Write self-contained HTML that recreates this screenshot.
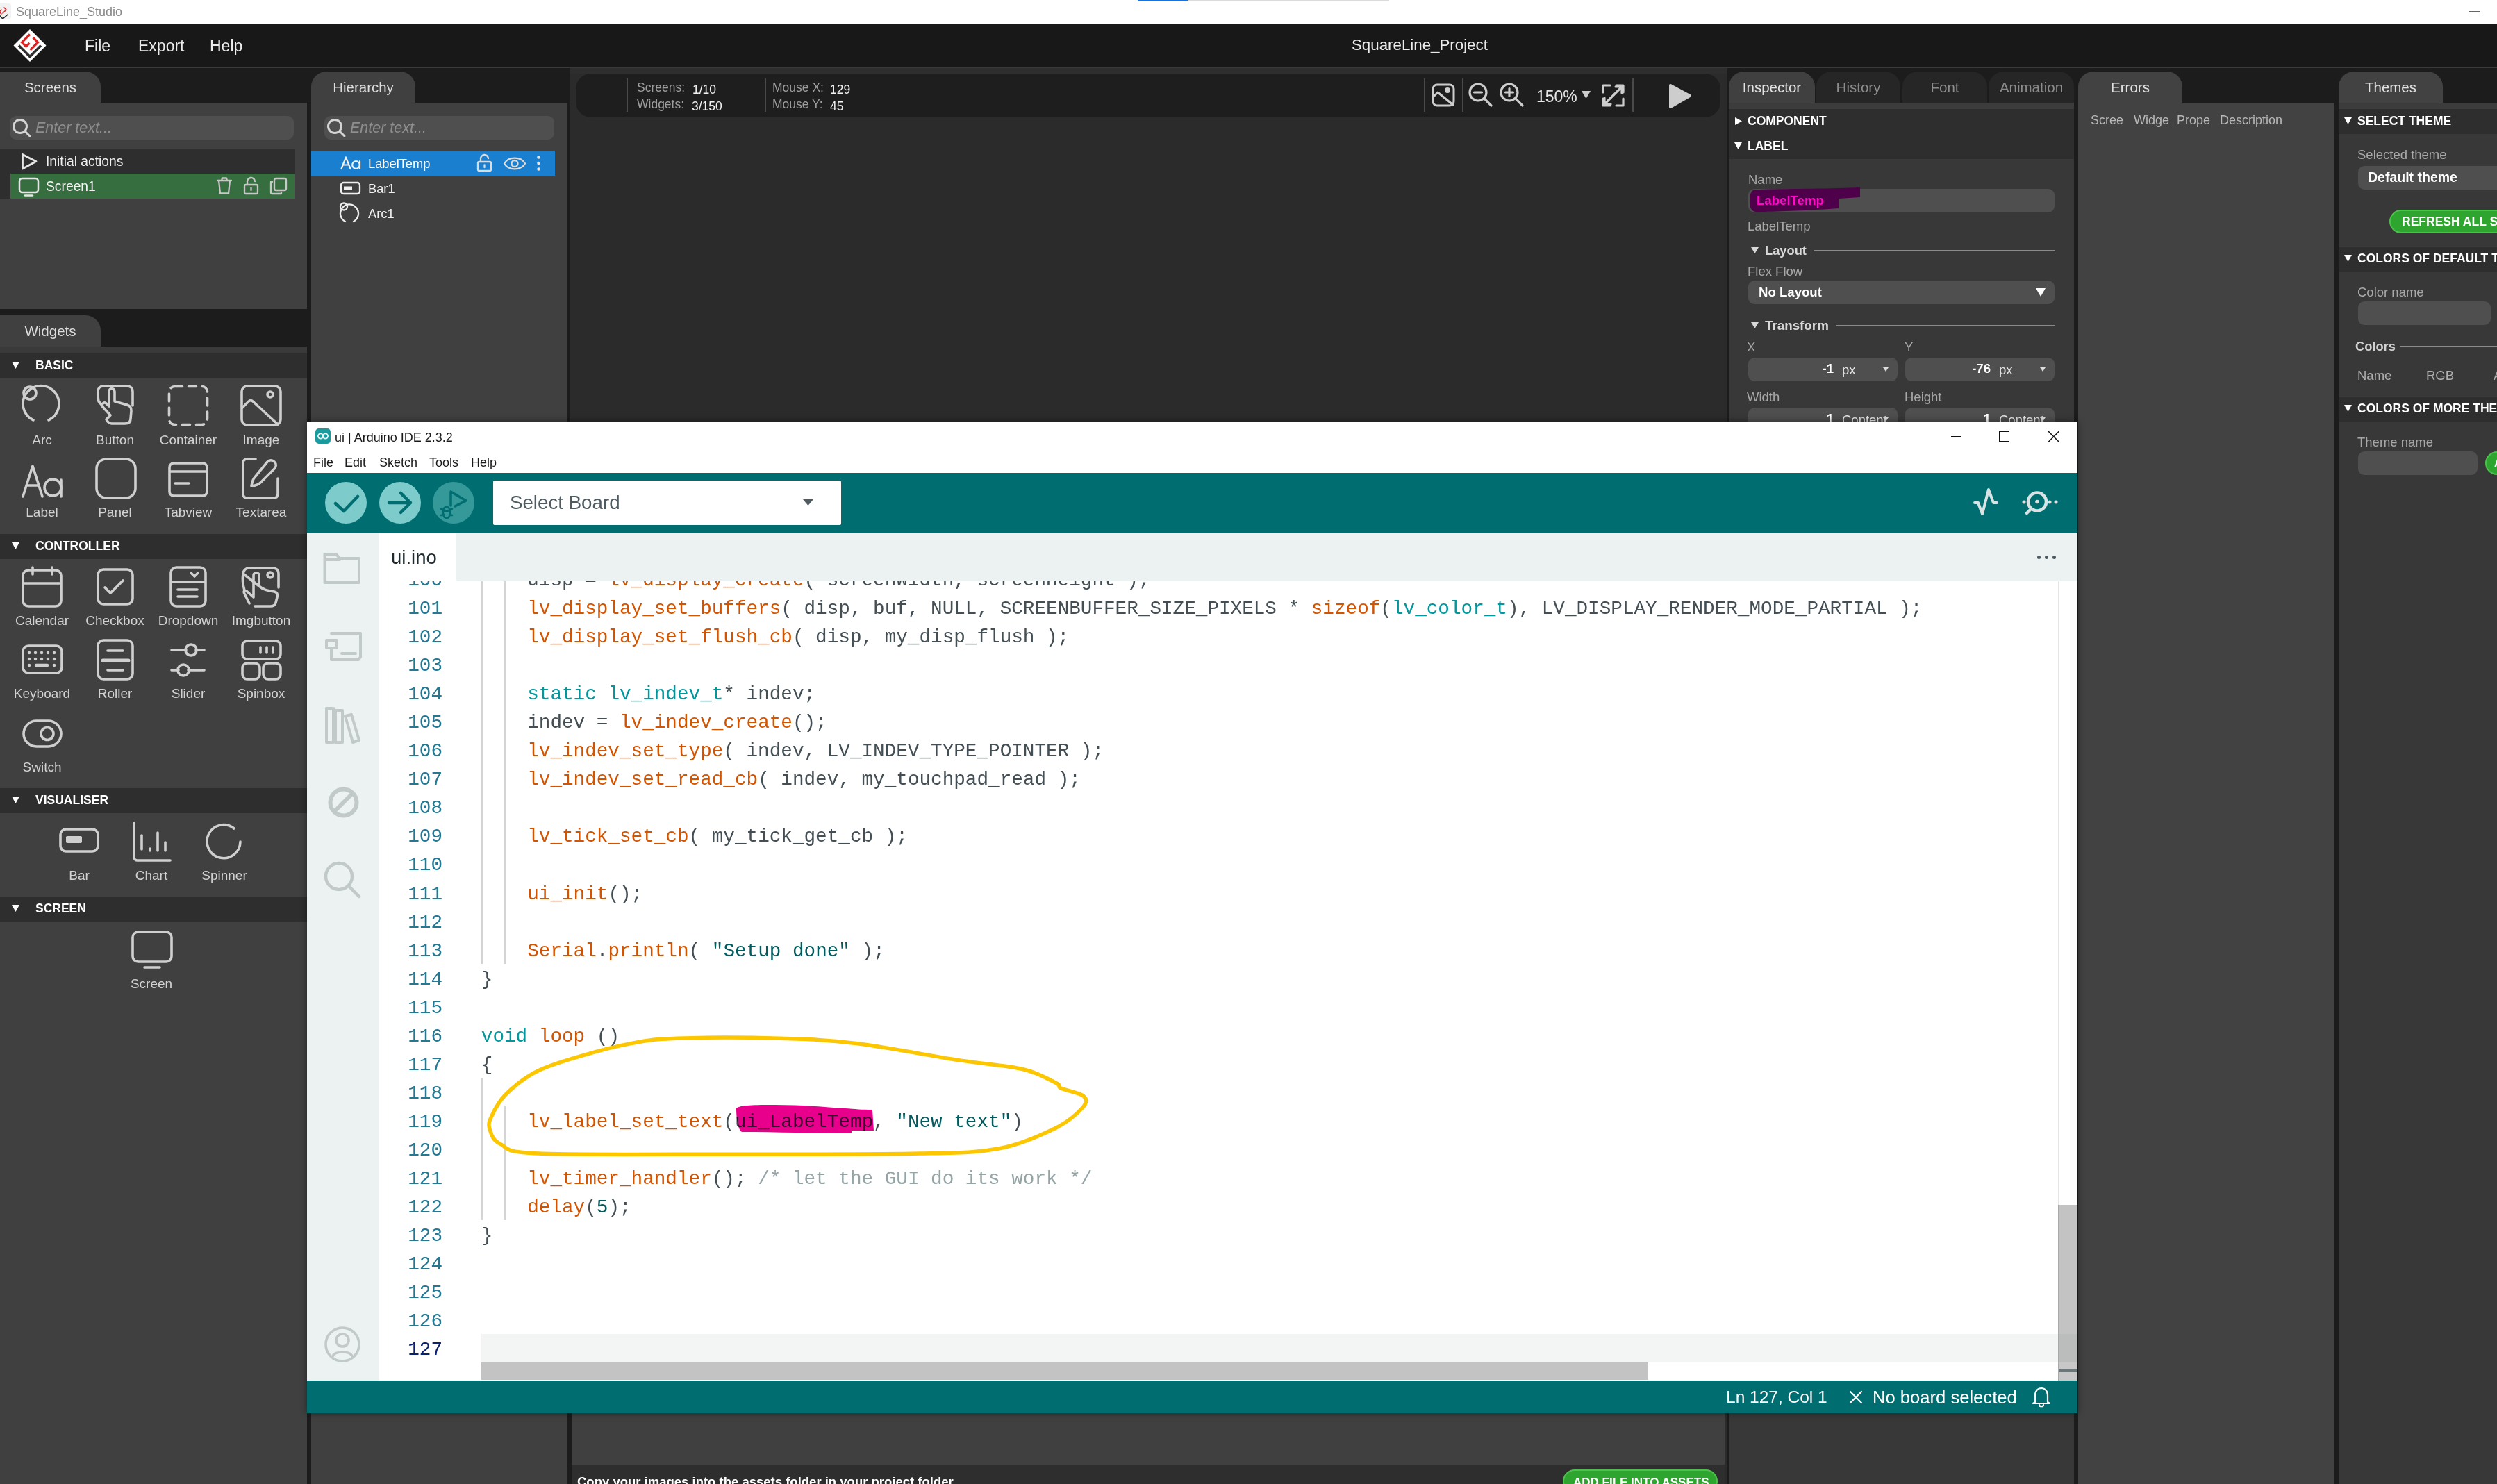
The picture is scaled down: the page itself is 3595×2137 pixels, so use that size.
<!DOCTYPE html>
<html><head><meta charset="utf-8"><style>
*{margin:0;padding:0;box-sizing:border-box}
html,body{width:3595px;height:2137px;overflow:hidden;background:#1c1c1c;font-family:"Liberation Sans",sans-serif;position:relative}
.a{position:absolute}
.t{position:absolute;white-space:nowrap;line-height:1}
svg{position:absolute;overflow:visible}
.code{position:absolute;left:693.6px;font-family:"Liberation Mono",monospace;font-size:27.66px;white-space:pre;color:#434f54;line-height:41.03px;height:41.03px}
.ln{position:absolute;left:535px;width:100px;text-align:right;font-family:"Liberation Mono",monospace;font-size:27.66px;color:#237893;line-height:41.03px;height:41.03px}
.f{color:#d35400}.k{color:#00979d}.s{color:#005c5f}.c{color:#95a5a6}.d{color:#4e5b61}
</style></head><body>
<div class="a" style="left:0px;top:0px;width:3595px;height:34px;background:#ffffff;"></div>
<div class="a" style="left:1638px;top:0px;width:72px;height:2px;background:#1a73d9;"></div>
<div class="a" style="left:1710px;top:0px;width:290px;height:2px;background:#dcdcdc;"></div>
<svg style="left:-2px;top:5px" width="20" height="24" viewBox="0 0 20 24" fill="none" stroke="#cfcfcf" stroke-width="0" stroke-linecap="round" stroke-linejoin="round" ><rect x="0" y="0" width="18" height="23" rx="4" fill="#f2f2f2" stroke="none"/><path d="M0 16 L6 22 L13 16" stroke="#222" stroke-width="1.6"/><path d="M4 9 L1 12 L4 15 M8 6 L11 9 L6 14" stroke="#e02424" stroke-width="1.6"/></svg>
<div class="t" style="left:23px;top:8.2px;font-size:18px;color:#8a8a8a;font-weight:normal;font-style:normal;font-family:"Liberation Sans",sans-serif;">SquareLine_Studio</div>
<div class="a" style="left:3555px;top:16px;width:15px;height:1px;background:#666;"></div>
<div class="a" style="left:0px;top:34px;width:3595px;height:63px;background:#181818;"></div>
<div class="a" style="left:0px;top:97px;width:3595px;height:1px;background:#3a3a3a;"></div>
<svg style="left:18px;top:40px" width="50" height="50" viewBox="0 0 50 50" fill="none" stroke="#cfcfcf" stroke-width="0" stroke-linecap="round" stroke-linejoin="round" ><path d="M25 2 L48.5 25.5 L25 49 L1.5 25.5 Z" fill="#fff" stroke="none"/><path d="M9 25.5 L25 41.5 L41 25.5" stroke="#2e2e2e" stroke-width="3.8" stroke-linecap="butt"/><path d="M25 9.5 L13.5 21 L19.5 27 L24.5 22" stroke="#e02424" stroke-width="3.2" stroke-linecap="butt" stroke-linejoin="miter"/><path d="M29.5 14 L36.5 21 L25.5 32" stroke="#e02424" stroke-width="3.2" stroke-linecap="butt" stroke-linejoin="miter"/></svg>
<div class="t" style="left:122px;top:54.7px;font-size:23px;color:#ececec;font-weight:normal;font-style:normal;font-family:"Liberation Sans",sans-serif;">File</div>
<div class="t" style="left:199px;top:54.7px;font-size:23px;color:#ececec;font-weight:normal;font-style:normal;font-family:"Liberation Sans",sans-serif;">Export</div>
<div class="t" style="left:302px;top:54.7px;font-size:23px;color:#ececec;font-weight:normal;font-style:normal;font-family:"Liberation Sans",sans-serif;">Help</div>
<div class="t" style="left:1946px;top:54.1px;font-size:22.3px;color:#ececec;font-weight:normal;font-style:normal;font-family:"Liberation Sans",sans-serif;">SquareLine_Project</div>
<div class="a" style="left:0px;top:103px;width:145px;height:45px;background:#404040;border-radius:0 22px 0 0"></div>
<div class="t" style="left:0px;width:145px;text-align:center;top:115.5px;font-size:20.5px;color:#dcdcdc">Screens</div>
<div class="a" style="left:0px;top:148px;width:442px;height:297px;background:#404040;"></div>
<div class="a" style="left:14px;top:167px;width:409px;height:34px;background:#4f4f4f;border-radius:9px"></div>
<svg style="left:17px;top:171px" width="30" height="28" viewBox="0 0 30 28" fill="none" stroke="#d4d4d4" stroke-width="3" stroke-linecap="round" stroke-linejoin="round" ><circle cx="12" cy="11" r="9.5"/><path d="M19 18 L26 25"/></svg>
<div class="t" style="left:51px;top:173.5px;font-size:21.5px;color:#8e8e8e;font-weight:normal;font-style:italic;font-family:"Liberation Sans",sans-serif;">Enter text...</div>
<div class="a" style="left:0px;top:214px;width:424px;height:72px;background:#2e2e2e;"></div>
<svg style="left:30px;top:220px" width="26" height="26" viewBox="0 0 26 26" fill="none" stroke="#e6e6e6" stroke-width="2.8" stroke-linecap="round" stroke-linejoin="round" ><path d="M2.5 2.5 L22 12.5 L2.5 23 Z"/></svg>
<div class="t" style="left:66px;top:223.0px;font-size:19.3px;color:#f0f0f0;font-weight:normal;font-style:normal;font-family:"Liberation Sans",sans-serif;">Initial actions</div>
<div class="a" style="left:15px;top:250px;width:409px;height:36px;background:#366e3f;"></div>
<svg style="left:26px;top:255px" width="32" height="28" viewBox="0 0 32 28" fill="none" stroke="#e6e6e6" stroke-width="2.5" stroke-linecap="round" stroke-linejoin="round" ><rect x="2" y="2" width="27" height="20" rx="4"/><path d="M10 26.5 L21 26.5"/></svg>
<div class="t" style="left:66px;top:259.0px;font-size:19.3px;color:#f4f4f4;font-weight:normal;font-style:normal;font-family:"Liberation Sans",sans-serif;">Screen1</div>
<svg style="left:311px;top:255px" width="24" height="26" viewBox="0 0 24 26" fill="none" stroke="#c8c8c8" stroke-width="2.3" stroke-linecap="round" stroke-linejoin="round" ><path d="M2 5 L22 5 M8 5 L9 1.5 L15 1.5 L16 5 M4 5 L6 23.5 L18 23.5 L20 5"/></svg>
<svg style="left:350px;top:255px" width="24" height="26" viewBox="0 0 24 26" fill="none" stroke="#c8c8c8" stroke-width="2.3" stroke-linecap="round" stroke-linejoin="round" ><rect x="2" y="11" width="19" height="13" rx="2"/><path d="M6 11 L6 7 A5.5 5.5 0 0 1 17 6"/><path d="M11.5 15.5 L11.5 19"/></svg>
<svg style="left:388px;top:255px" width="26" height="26" viewBox="0 0 26 26" fill="none" stroke="#c8c8c8" stroke-width="2.3" stroke-linecap="round" stroke-linejoin="round" ><rect x="7" y="2" width="17" height="17" rx="2.5"/><path d="M4 7 L2 7 L2 22 A2 2 0 0 0 4 24 L17 24 L17 22"/></svg>
<div class="a" style="left:0px;top:454px;width:145px;height:45px;background:#404040;border-radius:0 22px 0 0"></div>
<div class="t" style="left:0px;width:145px;text-align:center;top:466.5px;font-size:20.5px;color:#dcdcdc">Widgets</div>
<div class="a" style="left:0px;top:499px;width:442px;height:1638px;background:#404040;"></div>
<div class="a" style="left:0px;top:499px;width:442px;height:10px;background:#3a3a3a;"></div>
<div class="a" style="left:0px;top:509px;width:442px;height:36px;background:#2e2e2e;"></div>
<svg style="left:17px;top:521px" width="12" height="11" viewBox="0 0 12 11" fill="#fff" stroke="none" stroke-width="0" stroke-linecap="round" stroke-linejoin="round" ><path d="M0 0 L11 0 L5.5 10 Z"/></svg>
<div class="t" style="left:51px;top:518.4px;font-size:17.5px;color:#ffffff;font-weight:bold;font-style:normal;font-family:"Liberation Sans",sans-serif;">BASIC</div>
<div class="a" style="left:0px;top:769px;width:442px;height:36px;background:#2e2e2e;"></div>
<svg style="left:17px;top:781px" width="12" height="11" viewBox="0 0 12 11" fill="#fff" stroke="none" stroke-width="0" stroke-linecap="round" stroke-linejoin="round" ><path d="M0 0 L11 0 L5.5 10 Z"/></svg>
<div class="t" style="left:51px;top:778.4px;font-size:17.5px;color:#ffffff;font-weight:bold;font-style:normal;font-family:"Liberation Sans",sans-serif;">CONTROLLER</div>
<div class="a" style="left:0px;top:1135px;width:442px;height:36px;background:#2e2e2e;"></div>
<svg style="left:17px;top:1147px" width="12" height="11" viewBox="0 0 12 11" fill="#fff" stroke="none" stroke-width="0" stroke-linecap="round" stroke-linejoin="round" ><path d="M0 0 L11 0 L5.5 10 Z"/></svg>
<div class="t" style="left:51px;top:1144.4px;font-size:17.5px;color:#ffffff;font-weight:bold;font-style:normal;font-family:"Liberation Sans",sans-serif;">VISUALISER</div>
<div class="a" style="left:0px;top:1291px;width:442px;height:36px;background:#2e2e2e;"></div>
<svg style="left:17px;top:1303px" width="12" height="11" viewBox="0 0 12 11" fill="#fff" stroke="none" stroke-width="0" stroke-linecap="round" stroke-linejoin="round" ><path d="M0 0 L11 0 L5.5 10 Z"/></svg>
<div class="t" style="left:51px;top:1300.4px;font-size:17.5px;color:#ffffff;font-weight:bold;font-style:normal;font-family:"Liberation Sans",sans-serif;">SCREEN</div>
<svg style="left:31px;top:554px" width="60" height="60" viewBox="0 0 60 60" fill="none" stroke="#cfcfcf" stroke-width="3.6" stroke-linecap="round" stroke-linejoin="round" ><path d="M17 51 A26 26 0 1 1 39 51"/><circle cx="12" cy="12" r="9"/></svg>
<svg style="left:137px;top:554px" width="60" height="62" viewBox="0 0 60 62" fill="none" stroke="#cfcfcf" stroke-width="3.6" stroke-linecap="round" stroke-linejoin="round" ><path d="M22 44 L11 32 C8 29 12 24 16 27 L20 31 L20 10 C20 4 28 4 28 10 L28 24 L46 29 C51 31 52 33 52 38 L51 49 C51 54 48 56 43 56 L24 56 C20 56 18 54 16 50 Z"/><path d="M11 31 L5 24 C4 19 4 12 4 10 C4 5 7 2 12 2 L46 2 C51 2 54 5 54 10 L54 30"/></svg>
<svg style="left:241px;top:554px" width="60" height="60" viewBox="0 0 60 60" fill="none" stroke="#cfcfcf" stroke-width="3.6" stroke-linecap="round" stroke-linejoin="round" ><rect x="2.5" y="2.5" width="55" height="55" rx="8" stroke-dasharray="11 9"/></svg>
<svg style="left:346px;top:554px" width="60" height="60" viewBox="0 0 60 60" fill="none" stroke="#cfcfcf" stroke-width="3.6" stroke-linecap="round" stroke-linejoin="round" ><rect x="2" y="2" width="56" height="56" rx="8"/><path d="M3 33 L12 24 C14 22 16 22 18 24 L54 57"/><circle cx="43" cy="14" r="4"/></svg>
<div class="t" style="left:0.5px;width:120px;text-align:center;top:623.7px;font-size:19px;color:#d2d2d2">Arc</div>
<div class="t" style="left:105.5px;width:120px;text-align:center;top:623.7px;font-size:19px;color:#d2d2d2">Button</div>
<div class="t" style="left:211px;width:120px;text-align:center;top:623.7px;font-size:19px;color:#d2d2d2">Container</div>
<div class="t" style="left:316px;width:120px;text-align:center;top:623.7px;font-size:19px;color:#d2d2d2">Image</div>
<svg style="left:31px;top:667px" width="62" height="52" viewBox="0 0 62 52" fill="none" stroke="#cfcfcf" stroke-width="3.6" stroke-linecap="round" stroke-linejoin="round" ><path d="M2 48 L16 4 L30 48 M7 32 L25 32"/><circle cx="45" cy="35" r="12"/><path d="M57 24 L57 48"/></svg>
<svg style="left:137px;top:659px" width="60" height="60" viewBox="0 0 60 60" fill="none" stroke="#cfcfcf" stroke-width="3.6" stroke-linecap="round" stroke-linejoin="round" ><rect x="2" y="2" width="56" height="56" rx="14"/></svg>
<svg style="left:242px;top:665px" width="58" height="52" viewBox="0 0 58 52" fill="none" stroke="#cfcfcf" stroke-width="3.6" stroke-linecap="round" stroke-linejoin="round" ><rect x="2" y="2" width="54" height="47" rx="6"/><path d="M3 14 L55 14 M10 31 L30 31"/></svg>
<svg style="left:348px;top:659px" width="56" height="60" viewBox="0 0 56 60" fill="none" stroke="#cfcfcf" stroke-width="3.6" stroke-linecap="round" stroke-linejoin="round" ><path d="M20 2 L8 2 C4 2 2 4 2 8 L2 52 C2 56 4 58 8 58 L46 58 C50 58 52 56 52 52 L52 30"/><path d="M37 6 C40 3 44 3 47 6 C50 9 50 13 47 16 L27 36 C24 39 21 40 14 41 C15 34 16 31 19 28 Z"/></svg>
<div class="t" style="left:0.5px;width:120px;text-align:center;top:727.7px;font-size:19px;color:#d2d2d2">Label</div>
<div class="t" style="left:105.5px;width:120px;text-align:center;top:727.7px;font-size:19px;color:#d2d2d2">Panel</div>
<div class="t" style="left:211px;width:120px;text-align:center;top:727.7px;font-size:19px;color:#d2d2d2">Tabview</div>
<div class="t" style="left:316px;width:120px;text-align:center;top:727.7px;font-size:19px;color:#d2d2d2">Textarea</div>
<svg style="left:31px;top:815px" width="60" height="60" viewBox="0 0 60 60" fill="none" stroke="#cfcfcf" stroke-width="3.6" stroke-linecap="round" stroke-linejoin="round" ><rect x="2" y="6" width="55" height="52" rx="8"/><path d="M3 25 L56 25 M16 2 L16 12 M44 2 L44 12"/></svg>
<svg style="left:139px;top:818px" width="54" height="54" viewBox="0 0 54 54" fill="none" stroke="#cfcfcf" stroke-width="3.6" stroke-linecap="round" stroke-linejoin="round" ><rect x="2" y="2" width="50" height="50" rx="8"/><path d="M12 28 L20 36 L38 18"/></svg>
<svg style="left:244px;top:815px" width="54" height="60" viewBox="0 0 54 60" fill="none" stroke="#cfcfcf" stroke-width="3.6" stroke-linecap="round" stroke-linejoin="round" ><rect x="2" y="2" width="50" height="56" rx="8"/><path d="M3 23 L51 23 M31 10 L36 15 L41 10 M12 34 L40 34 M12 44 L40 44"/></svg>
<svg style="left:347px;top:816px" width="58" height="60" viewBox="0 0 58 60" fill="none" stroke="#cfcfcf" stroke-width="3.6" stroke-linecap="round" stroke-linejoin="round" ><path d="M12 53 L5 39 C3 35 5 33 9 36 L18 44 L18 12 C18 8 26 8 26 12 L26 28 C32 33 36 34 48 36 C52 37 53 40 52 44 L50 52 C49 56 46 57 42 57 L20 57"/><path d="M5 34 C2 24 2 16 3 10 C4 4 7 2 12 2 L46 2 C51 2 54 5 54 10 L54 30 M26 28 L3 10"/><circle cx="42" cy="12" r="4"/></svg>
<div class="t" style="left:0.5px;width:120px;text-align:center;top:883.7px;font-size:19px;color:#d2d2d2">Calendar</div>
<div class="t" style="left:105.5px;width:120px;text-align:center;top:883.7px;font-size:19px;color:#d2d2d2">Checkbox</div>
<div class="t" style="left:211px;width:120px;text-align:center;top:883.7px;font-size:19px;color:#d2d2d2">Dropdown</div>
<div class="t" style="left:316px;width:120px;text-align:center;top:883.7px;font-size:19px;color:#d2d2d2">Imgbutton</div>
<svg style="left:31px;top:928px" width="60" height="44" viewBox="0 0 60 44" fill="none" stroke="#cfcfcf" stroke-width="3.6" stroke-linecap="round" stroke-linejoin="round" ><rect x="2" y="2" width="56" height="39" rx="8"/><path d="M11 12 L11 12 M20 12 L20 12 M29 12 L29 12 M38 12 L38 12 M47 12 L47 12 M11 21 L11 21 M20 21 L20 21 M29 21 L29 21 M38 21 L38 21 M47 21 L47 21 M11 30 L11 30 M47 30 L47 30 M21 30 L37 30" stroke-width="4.5"/></svg>
<svg style="left:139px;top:920px" width="56" height="60" viewBox="0 0 56 60" fill="none" stroke="#cfcfcf" stroke-width="3.6" stroke-linecap="round" stroke-linejoin="round" ><rect x="2" y="2" width="50" height="56" rx="8"/><path d="M16 17 L38 17 M9 31 L46 31 M16 45 L38 45"/><path d="M9 31 L46 31" stroke-width="5"/></svg>
<svg style="left:244px;top:926px" width="54" height="56" viewBox="0 0 54 56" fill="none" stroke="#cfcfcf" stroke-width="3.6" stroke-linecap="round" stroke-linejoin="round" ><path d="M3 10 L24 10 M38 10 L50 10 M3 39 L13 39 M27 39 L50 39"/><circle cx="31" cy="10" r="8"/><circle cx="20" cy="39" r="8"/></svg>
<svg style="left:347px;top:921px" width="58" height="58" viewBox="0 0 58 58" fill="none" stroke="#cfcfcf" stroke-width="3.6" stroke-linecap="round" stroke-linejoin="round" ><rect x="2" y="2" width="55" height="26" rx="7"/><rect x="2" y="34" width="25" height="23" rx="7"/><rect x="32" y="34" width="25" height="23" rx="7"/><path d="M28 11 L28 19 M37 11 L37 19 M46 11 L46 19"/></svg>
<div class="t" style="left:0.5px;width:120px;text-align:center;top:988.7px;font-size:19px;color:#d2d2d2">Keyboard</div>
<div class="t" style="left:105.5px;width:120px;text-align:center;top:988.7px;font-size:19px;color:#d2d2d2">Roller</div>
<div class="t" style="left:211px;width:120px;text-align:center;top:988.7px;font-size:19px;color:#d2d2d2">Slider</div>
<div class="t" style="left:316px;width:120px;text-align:center;top:988.7px;font-size:19px;color:#d2d2d2">Spinbox</div>
<svg style="left:32px;top:1036px" width="58" height="42" viewBox="0 0 58 42" fill="none" stroke="#cfcfcf" stroke-width="3.6" stroke-linecap="round" stroke-linejoin="round" ><rect x="2" y="2" width="54" height="37" rx="18.5"/><circle cx="36" cy="20.5" r="9"/></svg>
<div class="t" style="left:0.5px;width:120px;text-align:center;top:1094.7px;font-size:19px;color:#d2d2d2">Switch</div>
<svg style="left:85px;top:1192px" width="58" height="38" viewBox="0 0 58 38" fill="none" stroke="#cfcfcf" stroke-width="3.6" stroke-linecap="round" stroke-linejoin="round" ><rect x="2" y="2" width="54" height="32" rx="8"/><rect x="10" y="12" width="23" height="10" rx="2" fill="#cfcfcf" stroke="none"/></svg>
<svg style="left:190px;top:1182px" width="58" height="60" viewBox="0 0 58 60" fill="none" stroke="#cfcfcf" stroke-width="3.6" stroke-linecap="round" stroke-linejoin="round" ><path d="M3 3 L3 52 C3 55 5 57 8 57 L55 57"/><path d="M14 21 L14 41 M26 40 L26 43 M37 17 L37 43 M48 31 L48 43"/></svg>
<svg style="left:297px;top:1187px" width="54" height="54" viewBox="0 0 54 54" fill="none" stroke="#cfcfcf" stroke-width="3.6" stroke-linecap="round" stroke-linejoin="round" ><path d="M40 6 A24 24 0 1 0 49 25"/></svg>
<div class="t" style="left:54px;width:120px;text-align:center;top:1250.7px;font-size:19px;color:#d2d2d2">Bar</div>
<div class="t" style="left:158px;width:120px;text-align:center;top:1250.7px;font-size:19px;color:#d2d2d2">Chart</div>
<div class="t" style="left:263px;width:120px;text-align:center;top:1250.7px;font-size:19px;color:#d2d2d2">Spinner</div>
<svg style="left:189px;top:1340px" width="60" height="56" viewBox="0 0 60 56" fill="none" stroke="#cfcfcf" stroke-width="3.6" stroke-linecap="round" stroke-linejoin="round" ><rect x="2" y="2" width="56" height="43" rx="8"/><path d="M19 53 L41 53"/></svg>
<div class="t" style="left:158px;width:120px;text-align:center;top:1406.7px;font-size:19px;color:#d2d2d2">Screen</div>
<div class="a" style="left:442px;top:98px;width:6px;height:2039px;background:#1c1c1c;"></div>
<div class="a" style="left:448px;top:103px;width:150px;height:45px;background:#404040;border-radius:22px 22px 0 0"></div>
<div class="t" style="left:448px;width:150px;text-align:center;top:115.5px;font-size:20.5px;color:#dcdcdc">Hierarchy</div>
<div class="a" style="left:448px;top:148px;width:369px;height:1989px;background:#404040;"></div>
<div class="a" style="left:467px;top:167px;width:331px;height:34px;background:#4f4f4f;border-radius:9px"></div>
<svg style="left:470px;top:171px" width="30" height="28" viewBox="0 0 30 28" fill="none" stroke="#d4d4d4" stroke-width="3" stroke-linecap="round" stroke-linejoin="round" ><circle cx="12" cy="11" r="9.5"/><path d="M19 18 L26 25"/></svg>
<div class="t" style="left:504px;top:173.5px;font-size:21.5px;color:#8e8e8e;font-weight:normal;font-style:italic;font-family:"Liberation Sans",sans-serif;">Enter text...</div>
<div class="a" style="left:448px;top:217px;width:351px;height:36px;background:#1a7fcf;"></div>
<svg style="left:489px;top:224px" width="34" height="22" viewBox="0 0 34 22" fill="none" stroke="#f2f2f2" stroke-width="2.2" stroke-linecap="round" stroke-linejoin="round" ><path d="M2.5 19 L9 2.5 L15.5 19 M5 13.5 L13 13.5"/><circle cx="23.5" cy="13.5" r="5.3"/><path d="M29 8 L29 19"/></svg>
<div class="t" style="left:530px;top:227.0px;font-size:18.3px;color:#ffffff;font-weight:normal;font-style:normal;font-family:"Liberation Sans",sans-serif;">LabelTemp</div>
<svg style="left:686px;top:222px" width="24" height="27" viewBox="0 0 24 27" fill="none" stroke="#dcdcdc" stroke-width="2.3" stroke-linecap="round" stroke-linejoin="round" ><rect x="2" y="11" width="19" height="13" rx="2"/><path d="M6 11 L6 7 A5.5 5.5 0 0 1 17 6"/><path d="M11.5 15.5 L11.5 19"/></svg>
<svg style="left:724px;top:226px" width="35" height="20" viewBox="0 0 35 20" fill="none" stroke="#dcdcdc" stroke-width="2.3" stroke-linecap="round" stroke-linejoin="round" ><path d="M2 9.5 C8 -1 26 -1 32 9.5 C26 20 8 20 2 9.5 Z"/><circle cx="17" cy="9.5" r="4.5"/></svg>
<svg style="left:772px;top:223px" width="8" height="26" viewBox="0 0 8 26" fill="#e6e6e6" stroke="none" stroke-width="0" stroke-linecap="round" stroke-linejoin="round" ><circle cx="3.5" cy="3.5" r="2.3"/><circle cx="3.5" cy="12" r="2.3"/><circle cx="3.5" cy="20.5" r="2.3"/></svg>
<svg style="left:489px;top:261px" width="33" height="21" viewBox="0 0 33 21" fill="none" stroke="#eeeeee" stroke-width="2.3" stroke-linecap="round" stroke-linejoin="round" ><rect x="2" y="2" width="27" height="16" rx="3.5"/><rect x="6" y="7.5" width="12" height="5" fill="#eee" stroke="none"/></svg>
<div class="t" style="left:530px;top:263.0px;font-size:18.3px;color:#f0f0f0;font-weight:normal;font-style:normal;font-family:"Liberation Sans",sans-serif;">Bar1</div>
<svg style="left:489px;top:292px" width="32" height="32" viewBox="0 0 32 32" fill="none" stroke="#eeeeee" stroke-width="2.3" stroke-linecap="round" stroke-linejoin="round" ><path d="M8 27 A13 13 0 1 1 20 27"/><circle cx="6" cy="5.5" r="5"/></svg>
<div class="t" style="left:530px;top:299.0px;font-size:18.3px;color:#f0f0f0;font-weight:normal;font-style:normal;font-family:"Liberation Sans",sans-serif;">Arc1</div>
<div class="a" style="left:817px;top:98px;width:3px;height:2039px;background:#1c1c1c;"></div>
<div class="a" style="left:820px;top:98px;width:1666px;height:2039px;background:#2b2b2b;"></div>
<div class="a" style="left:820px;top:98px;width:1666px;height:8px;background:#2e2e2e;"></div>
<div class="a" style="left:829px;top:106px;width:1648px;height:63px;background:#1e1e1e;border-radius:22px"></div>
<div class="a" style="left:902px;top:113px;width:2px;height:48px;background:#4a4a4a;"></div>
<div class="a" style="left:1101px;top:113px;width:2px;height:48px;background:#4a4a4a;"></div>
<div class="a" style="left:2050px;top:113px;width:2px;height:48px;background:#4a4a4a;"></div>
<div class="a" style="left:2105px;top:113px;width:2px;height:48px;background:#4a4a4a;"></div>
<div class="a" style="left:2350px;top:113px;width:2px;height:48px;background:#4a4a4a;"></div>
<div class="t" style="left:917px;top:118.4px;font-size:17.5px;color:#9e9e9e;font-weight:normal;font-style:normal;font-family:"Liberation Sans",sans-serif;">Screens:</div>
<div class="t" style="left:997px;top:120.9px;font-size:17.5px;color:#f2f2f2;font-weight:normal;font-style:normal;font-family:"Liberation Sans",sans-serif;">1/10</div>
<div class="t" style="left:917px;top:142.4px;font-size:17.5px;color:#9e9e9e;font-weight:normal;font-style:normal;font-family:"Liberation Sans",sans-serif;">Widgets:</div>
<div class="t" style="left:996px;top:144.9px;font-size:17.5px;color:#f2f2f2;font-weight:normal;font-style:normal;font-family:"Liberation Sans",sans-serif;">3/150</div>
<div class="t" style="left:1112px;top:118.4px;font-size:17.5px;color:#9e9e9e;font-weight:normal;font-style:normal;font-family:"Liberation Sans",sans-serif;">Mouse X:</div>
<div class="t" style="left:1195px;top:120.9px;font-size:17.5px;color:#f2f2f2;font-weight:normal;font-style:normal;font-family:"Liberation Sans",sans-serif;">129</div>
<div class="t" style="left:1112px;top:142.4px;font-size:17.5px;color:#9e9e9e;font-weight:normal;font-style:normal;font-family:"Liberation Sans",sans-serif;">Mouse Y:</div>
<div class="t" style="left:1195px;top:144.9px;font-size:17.5px;color:#f2f2f2;font-weight:normal;font-style:normal;font-family:"Liberation Sans",sans-serif;">45</div>
<svg style="left:2061px;top:120px" width="34" height="34" viewBox="0 0 34 34" fill="none" stroke="#cdcdcd" stroke-width="3" stroke-linecap="round" stroke-linejoin="round" ><rect x="2" y="2" width="30" height="30" rx="6"/><path d="M3 19 L9 13 L31 31"/><circle cx="23" cy="10" r="2.5" fill="#cdcdcd"/></svg>
<svg style="left:2114px;top:119px" width="38" height="38" viewBox="0 0 38 38" fill="none" stroke="#cdcdcd" stroke-width="3.2" stroke-linecap="round" stroke-linejoin="round" ><circle cx="14" cy="14" r="12"/><path d="M23 23 L33 33 M8.5 14 L19.5 14"/></svg>
<svg style="left:2159px;top:119px" width="38" height="38" viewBox="0 0 38 38" fill="none" stroke="#cdcdcd" stroke-width="3.2" stroke-linecap="round" stroke-linejoin="round" ><circle cx="14" cy="14" r="12"/><path d="M23 23 L33 33 M8.5 14 L19.5 14 M14 8.5 L14 19.5"/></svg>
<div class="t" style="left:2212px;top:127.7px;font-size:23px;color:#e6e6e6;font-weight:normal;font-style:normal;font-family:"Liberation Sans",sans-serif;">150%</div>
<svg style="left:2277px;top:131px" width="14" height="12" viewBox="0 0 14 12" fill="#cdcdcd" stroke="none" stroke-width="0" stroke-linecap="round" stroke-linejoin="round" ><path d="M0 0 L13 0 L6.5 11 Z"/></svg>
<svg style="left:2305px;top:120px" width="36" height="36" viewBox="0 0 36 36" fill="none" stroke="#cdcdcd" stroke-width="3.2" stroke-linecap="round" stroke-linejoin="round" ><path d="M3 13 L3 3 L13 3 M22 3 L32 3 L32 13 M32 22 L32 32 L22 32 M13 32 L3 32 L3 22 M5 30 L30 5 M30 5 L21 5 M30 5 L30 14 M5 30 L14 30 M5 30 L5 21"/></svg>
<svg style="left:2400px;top:119px" width="38" height="40" viewBox="0 0 38 40" fill="#cdcdcd" stroke="#cdcdcd" stroke-width="4" stroke-linecap="round" stroke-linejoin="round" ><path d="M5 4 L33 19 L5 35 Z"/></svg>
<div class="a" style="left:2486px;top:98px;width:3px;height:2039px;background:#1c1c1c;"></div>
<div class="a" style="left:2489px;top:103px;width:124px;height:45px;background:#404040;border-radius:22px 22px 0 0"></div>
<div class="t" style="left:2489px;width:124px;text-align:center;top:115.5px;font-size:20.5px;color:#e2e2e2">Inspector</div>
<div class="a" style="left:2615px;top:103px;width:121px;height:45px;background:#262626;border-radius:22px 22px 0 0"></div>
<div class="t" style="left:2615px;width:121px;text-align:center;top:115.5px;font-size:20.5px;color:#8c8c8c">History</div>
<div class="a" style="left:2739px;top:103px;width:122px;height:45px;background:#262626;border-radius:22px 22px 0 0"></div>
<div class="t" style="left:2739px;width:122px;text-align:center;top:115.5px;font-size:20.5px;color:#8c8c8c">Font</div>
<div class="a" style="left:2863px;top:103px;width:123px;height:45px;background:#262626;border-radius:22px 22px 0 0"></div>
<div class="t" style="left:2863px;width:123px;text-align:center;top:115.5px;font-size:20.5px;color:#8c8c8c">Animation</div>
<div class="a" style="left:2489px;top:148px;width:497px;height:1989px;background:#383838;"></div>
<div class="a" style="left:2489px;top:148px;width:497px;height:9px;background:#3c3c3c;"></div>
<div class="a" style="left:2489px;top:157px;width:497px;height:36px;background:#2e2e2e;"></div>
<svg style="left:2498px;top:169px" width="11" height="12" viewBox="0 0 11 12" fill="#fff" stroke="none" stroke-width="0" stroke-linecap="round" stroke-linejoin="round" ><path d="M0 0 L10 5.5 L0 11 Z"/></svg>
<div class="t" style="left:2516px;top:166.4px;font-size:17.5px;color:#ffffff;font-weight:bold;font-style:normal;font-family:"Liberation Sans",sans-serif;">COMPONENT</div>
<div class="a" style="left:2489px;top:193px;width:497px;height:36px;background:#2e2e2e;"></div>
<svg style="left:2497px;top:205px" width="12" height="11" viewBox="0 0 12 11" fill="#fff" stroke="none" stroke-width="0" stroke-linecap="round" stroke-linejoin="round" ><path d="M0 0 L11 0 L5.5 10 Z"/></svg>
<div class="t" style="left:2516px;top:202.4px;font-size:17.5px;color:#ffffff;font-weight:bold;font-style:normal;font-family:"Liberation Sans",sans-serif;">LABEL</div>
<div class="t" style="left:2517px;top:249.9px;font-size:18.5px;color:#a8a8a8;font-weight:normal;font-style:normal;font-family:"Liberation Sans",sans-serif;">Name</div>
<div class="a" style="left:2517px;top:272px;width:441px;height:34px;background:#4f4f4f;border-radius:9px"></div>
<svg style="left:2517px;top:270px" width="165" height="38" viewBox="0 0 165 38" fill="#4f004b" stroke="none" stroke-width="0" stroke-linecap="round" stroke-linejoin="round" ><path d="M10 3 C40 2 120 2 161 0 L161 14 L130 16 L130 30 C90 33 40 35 12 35 C4 35 2 28 2 20 C2 12 3 4 10 3 Z"/></svg>
<div class="t" style="left:2529px;top:279.9px;font-size:18.6px;color:#ff08c8;font-weight:bold;font-style:normal;font-family:"Liberation Sans",sans-serif;">LabelTemp</div>
<div class="t" style="left:2516px;top:316.9px;font-size:18.5px;color:#a8a8a8;font-weight:normal;font-style:normal;font-family:"Liberation Sans",sans-serif;">LabelTemp</div>
<svg style="left:2521px;top:356px" width="12" height="10" viewBox="0 0 12 10" fill="#d8d8d8" stroke="none" stroke-width="0" stroke-linecap="round" stroke-linejoin="round" ><path d="M0 0 L11 0 L5.5 9 Z"/></svg>
<div class="t" style="left:2541px;top:352.0px;font-size:18.3px;color:#d8d8d8;font-weight:bold;font-style:normal;font-family:"Liberation Sans",sans-serif;">Layout</div>
<div class="a" style="left:2611px;top:360px;width:348px;height:2px;background:#8a8a8a;"></div>
<div class="t" style="left:2516px;top:381.9px;font-size:18.5px;color:#a8a8a8;font-weight:normal;font-style:normal;font-family:"Liberation Sans",sans-serif;">Flex Flow</div>
<div class="a" style="left:2517px;top:404px;width:441px;height:34px;background:#4f4f4f;border-radius:9px"></div>
<div class="t" style="left:2532px;top:411.9px;font-size:18.6px;color:#ffffff;font-weight:bold;font-style:normal;font-family:"Liberation Sans",sans-serif;">No Layout</div>
<svg style="left:2931px;top:415px" width="15" height="13" viewBox="0 0 15 13" fill="#ffffff" stroke="none" stroke-width="0" stroke-linecap="round" stroke-linejoin="round" ><path d="M0 0 L14 0 L7 12 Z"/></svg>
<svg style="left:2521px;top:464px" width="12" height="10" viewBox="0 0 12 10" fill="#d8d8d8" stroke="none" stroke-width="0" stroke-linecap="round" stroke-linejoin="round" ><path d="M0 0 L11 0 L5.5 9 Z"/></svg>
<div class="t" style="left:2541px;top:459.8px;font-size:18.8px;color:#d8d8d8;font-weight:bold;font-style:normal;font-family:"Liberation Sans",sans-serif;">Transform</div>
<div class="a" style="left:2643px;top:468px;width:316px;height:2px;background:#8a8a8a;"></div>
<div class="t" style="left:2515px;top:490.9px;font-size:18.5px;color:#a8a8a8;font-weight:normal;font-style:normal;font-family:"Liberation Sans",sans-serif;">X</div>
<div class="t" style="left:2742px;top:490.9px;font-size:18.5px;color:#a8a8a8;font-weight:normal;font-style:normal;font-family:"Liberation Sans",sans-serif;">Y</div>
<div class="a" style="left:2517px;top:515px;width:215px;height:34px;background:#4f4f4f;border-radius:9px"></div>
<div class="a" style="left:2743px;top:515px;width:215px;height:34px;background:#4f4f4f;border-radius:9px"></div>
<div class="t" style="left:2540px;width:100px;text-align:right;top:521.5px;font-size:18.6px;color:#fff;font-weight:bold">-1</div>
<div class="t" style="left:2652px;top:523.9px;font-size:18.5px;color:#e8e8e8;font-weight:normal;font-style:normal;font-family:"Liberation Sans",sans-serif;">px</div>
<svg style="left:2711px;top:529px" width="9" height="7" viewBox="0 0 9 7" fill="#ddd" stroke="none" stroke-width="0" stroke-linecap="round" stroke-linejoin="round" ><path d="M0 0 L8 0 L4 6 Z"/></svg>
<div class="t" style="left:2766px;width:100px;text-align:right;top:521.5px;font-size:18.6px;color:#fff;font-weight:bold">-76</div>
<div class="t" style="left:2878px;top:523.9px;font-size:18.5px;color:#e8e8e8;font-weight:normal;font-style:normal;font-family:"Liberation Sans",sans-serif;">px</div>
<svg style="left:2937px;top:529px" width="9" height="7" viewBox="0 0 9 7" fill="#ddd" stroke="none" stroke-width="0" stroke-linecap="round" stroke-linejoin="round" ><path d="M0 0 L8 0 L4 6 Z"/></svg>
<div class="t" style="left:2515px;top:562.9px;font-size:18.5px;color:#a8a8a8;font-weight:normal;font-style:normal;font-family:"Liberation Sans",sans-serif;">Width</div>
<div class="t" style="left:2742px;top:562.9px;font-size:18.5px;color:#a8a8a8;font-weight:normal;font-style:normal;font-family:"Liberation Sans",sans-serif;">Height</div>
<div class="a" style="left:2517px;top:587px;width:215px;height:34px;background:#4f4f4f;border-radius:9px"></div>
<div class="a" style="left:2743px;top:587px;width:215px;height:34px;background:#4f4f4f;border-radius:9px"></div>
<div class="t" style="left:2540px;width:100px;text-align:right;top:593.5px;font-size:18.6px;color:#fff;font-weight:bold">1</div>
<div class="t" style="left:2652px;top:595.9px;font-size:18.5px;color:#e8e8e8;font-weight:normal;font-style:normal;font-family:"Liberation Sans",sans-serif;">Content</div>
<svg style="left:2711px;top:601px" width="9" height="7" viewBox="0 0 9 7" fill="#ddd" stroke="none" stroke-width="0" stroke-linecap="round" stroke-linejoin="round" ><path d="M0 0 L8 0 L4 6 Z"/></svg>
<div class="t" style="left:2766px;width:100px;text-align:right;top:593.5px;font-size:18.6px;color:#fff;font-weight:bold">1</div>
<div class="t" style="left:2878px;top:595.9px;font-size:18.5px;color:#e8e8e8;font-weight:normal;font-style:normal;font-family:"Liberation Sans",sans-serif;">Content</div>
<svg style="left:2937px;top:601px" width="9" height="7" viewBox="0 0 9 7" fill="#ddd" stroke="none" stroke-width="0" stroke-linecap="round" stroke-linejoin="round" ><path d="M0 0 L8 0 L4 6 Z"/></svg>
<div class="a" style="left:2986px;top:98px;width:6px;height:2039px;background:#1c1c1c;"></div>
<div class="a" style="left:2992px;top:103px;width:150px;height:45px;background:#424242;border-radius:22px 22px 0 0"></div>
<div class="t" style="left:2992px;width:150px;text-align:center;top:115.5px;font-size:20.5px;color:#e2e2e2">Errors</div>
<div class="a" style="left:2992px;top:148px;width:369px;height:1989px;background:#424242;"></div>
<div class="t" style="left:3010px;top:164.2px;font-size:18px;color:#b8b8b8;font-weight:normal;font-style:normal;font-family:"Liberation Sans",sans-serif;">Scree</div>
<div class="t" style="left:3072px;top:164.2px;font-size:18px;color:#b8b8b8;font-weight:normal;font-style:normal;font-family:"Liberation Sans",sans-serif;">Widge</div>
<div class="t" style="left:3134px;top:164.2px;font-size:18px;color:#b8b8b8;font-weight:normal;font-style:normal;font-family:"Liberation Sans",sans-serif;">Prope</div>
<div class="t" style="left:3196px;top:164.2px;font-size:18px;color:#b8b8b8;font-weight:normal;font-style:normal;font-family:"Liberation Sans",sans-serif;">Description</div>
<div class="a" style="left:3361px;top:98px;width:6px;height:2039px;background:#1c1c1c;"></div>
<div class="a" style="left:3367px;top:103px;width:150px;height:45px;background:#424242;border-radius:22px 22px 0 0"></div>
<div class="t" style="left:3367px;width:150px;text-align:center;top:115.5px;font-size:20.5px;color:#e2e2e2">Themes</div>
<div class="a" style="left:3367px;top:148px;width:228px;height:1989px;background:#383838;"></div>
<div class="a" style="left:3367px;top:148px;width:228px;height:9px;background:#3c3c3c;"></div>
<div class="a" style="left:3367px;top:157px;width:228px;height:36px;background:#2e2e2e;"></div>
<svg style="left:3375px;top:169px" width="12" height="11" viewBox="0 0 12 11" fill="#fff" stroke="none" stroke-width="0" stroke-linecap="round" stroke-linejoin="round" ><path d="M0 0 L11 0 L5.5 10 Z"/></svg>
<div class="t" style="left:3394px;top:166.4px;font-size:17.5px;color:#ffffff;font-weight:bold;font-style:normal;font-family:"Liberation Sans",sans-serif;">SELECT THEME</div>
<div class="t" style="left:3394px;top:213.9px;font-size:18.5px;color:#a8a8a8;font-weight:normal;font-style:normal;font-family:"Liberation Sans",sans-serif;">Selected theme</div>
<div class="a" style="left:3395px;top:239px;width:220px;height:34px;background:#4f4f4f;border-radius:9px"></div>
<div class="t" style="left:3409px;top:246.4px;font-size:19.5px;color:#ffffff;font-weight:bold;font-style:normal;font-family:"Liberation Sans",sans-serif;">Default theme</div>
<div class="a" style="left:3440px;top:302px;width:200px;height:34px;background:#2ea52e;border-radius:17px;border:2px solid #4cc24c"></div>
<div class="t" style="left:3458px;top:311.4px;font-size:17.5px;color:#ffffff;font-weight:bold;font-style:normal;font-family:"Liberation Sans",sans-serif;">REFRESH ALL SCREENS</div>
<div class="a" style="left:3367px;top:355px;width:228px;height:36px;background:#2e2e2e;"></div>
<svg style="left:3375px;top:367px" width="12" height="11" viewBox="0 0 12 11" fill="#fff" stroke="none" stroke-width="0" stroke-linecap="round" stroke-linejoin="round" ><path d="M0 0 L11 0 L5.5 10 Z"/></svg>
<div class="t" style="left:3394px;top:364.4px;font-size:17.5px;color:#ffffff;font-weight:bold;font-style:normal;font-family:"Liberation Sans",sans-serif;">COLORS OF DEFAULT THEME</div>
<div class="t" style="left:3394px;top:411.9px;font-size:18.5px;color:#a8a8a8;font-weight:normal;font-style:normal;font-family:"Liberation Sans",sans-serif;">Color name</div>
<div class="a" style="left:3395px;top:434px;width:191px;height:34px;background:#4f4f4f;border-radius:9px"></div>
<div class="t" style="left:3391px;top:490.0px;font-size:18.3px;color:#d0d0d0;font-weight:bold;font-style:normal;font-family:"Liberation Sans",sans-serif;">Colors</div>
<div class="a" style="left:3455px;top:498px;width:140px;height:2px;background:#8a8a8a;"></div>
<div class="t" style="left:3394px;top:531.9px;font-size:18.5px;color:#b0b0b0;font-weight:normal;font-style:normal;font-family:"Liberation Sans",sans-serif;">Name</div>
<div class="t" style="left:3493px;top:531.9px;font-size:18.5px;color:#b0b0b0;font-weight:normal;font-style:normal;font-family:"Liberation Sans",sans-serif;">RGB</div>
<div class="t" style="left:3590px;top:531.9px;font-size:18.5px;color:#b0b0b0;font-weight:normal;font-style:normal;font-family:"Liberation Sans",sans-serif;">A</div>
<div class="a" style="left:3367px;top:571px;width:228px;height:36px;background:#2e2e2e;"></div>
<svg style="left:3375px;top:583px" width="12" height="11" viewBox="0 0 12 11" fill="#fff" stroke="none" stroke-width="0" stroke-linecap="round" stroke-linejoin="round" ><path d="M0 0 L11 0 L5.5 10 Z"/></svg>
<div class="t" style="left:3394px;top:580.4px;font-size:17.5px;color:#ffffff;font-weight:bold;font-style:normal;font-family:"Liberation Sans",sans-serif;">COLORS OF MORE THEMES</div>
<div class="t" style="left:3394px;top:627.9px;font-size:18.5px;color:#a8a8a8;font-weight:normal;font-style:normal;font-family:"Liberation Sans",sans-serif;">Theme name</div>
<div class="a" style="left:3395px;top:650px;width:172px;height:34px;background:#4f4f4f;border-radius:9px"></div>
<div class="a" style="left:3578px;top:650px;width:40px;height:34px;background:#2ea52e;border-radius:17px;border:2px solid #4cc24c"></div>
<div class="t" style="left:3591px;top:658.4px;font-size:17.5px;color:#ffffff;font-weight:bold;font-style:normal;font-family:"Liberation Sans",sans-serif;">A</div>
<div class="a" style="left:820px;top:1990px;width:3px;height:147px;background:#1c1c1c;"></div>
<div class="a" style="left:823px;top:1990px;width:1660px;height:119px;background:#404040;"></div>
<div class="a" style="left:823px;top:2109px;width:1660px;height:28px;background:#2e2e2e;"></div>
<div class="t" style="left:831px;top:2124.9px;font-size:18.5px;color:#ffffff;font-weight:bold;font-style:normal;font-family:"Liberation Sans",sans-serif;">Copy your images into the assets folder in your project folder</div>
<div class="a" style="left:2250px;top:2116px;width:223px;height:34px;background:#2ea52e;border-radius:17px;border:2px solid #4cc24c"></div>
<div class="t" style="left:2265px;top:2125.7px;font-size:17px;color:#ffffff;font-weight:bold;font-style:normal;font-family:"Liberation Sans",sans-serif;">ADD FILE INTO ASSETS</div>
<div class="a" style="left:442px;top:607px;width:2549px;height:1428px;background:#ffffff;box-shadow:0 0 10px rgba(0,0,0,0.45)"></div>
<svg style="left:454px;top:617px" width="23" height="23" viewBox="0 0 23 23" fill="none" stroke="#cfcfcf" stroke-width="0" stroke-linecap="round" stroke-linejoin="round" ><rect x="0" y="0" width="22" height="22" rx="5" fill="#1a9a9c" stroke="none"/><circle cx="7.5" cy="11" r="3.6" stroke="#e8f4f4" stroke-width="1.8"/><circle cx="14.5" cy="11" r="3.6" stroke="#e8f4f4" stroke-width="1.8"/></svg>
<div class="t" style="left:482px;top:621.2px;font-size:18px;color:#1a1a1a;font-weight:normal;font-style:normal;font-family:"Liberation Sans",sans-serif;">ui | Arduino IDE 2.3.2</div>
<div class="a" style="left:2809px;top:628px;width:15px;height:1px;background:#111;"></div>
<div class="a" style="left:2878px;top:621px;width:15px;height:15px;background:transparent;border:1.5px solid #111"></div>
<svg style="left:2949px;top:621px" width="16" height="16" viewBox="0 0 16 16" fill="none" stroke="#111" stroke-width="1.5" stroke-linecap="round" stroke-linejoin="round" ><path d="M0.5 0.5 L15 15 M15 0.5 L0.5 15"/></svg>
<div class="t" style="left:451px;top:657.2px;font-size:18px;color:#1a1a1a;font-weight:normal;font-style:normal;font-family:"Liberation Sans",sans-serif;">File</div>
<div class="t" style="left:496px;top:657.2px;font-size:18px;color:#1a1a1a;font-weight:normal;font-style:normal;font-family:"Liberation Sans",sans-serif;">Edit</div>
<div class="t" style="left:546px;top:657.2px;font-size:18px;color:#1a1a1a;font-weight:normal;font-style:normal;font-family:"Liberation Sans",sans-serif;">Sketch</div>
<div class="t" style="left:618px;top:657.2px;font-size:18px;color:#1a1a1a;font-weight:normal;font-style:normal;font-family:"Liberation Sans",sans-serif;">Tools</div>
<div class="t" style="left:678px;top:657.2px;font-size:18px;color:#1a1a1a;font-weight:normal;font-style:normal;font-family:"Liberation Sans",sans-serif;">Help</div>
<div class="a" style="left:442px;top:681px;width:2549px;height:86px;background:#006d70;"></div>
<div class="a" style="left:468px;top:694px;width:60px;height:60px;border-radius:50%;background:#7ecbcb"></div>
<div class="a" style="left:546px;top:694px;width:60px;height:60px;border-radius:50%;background:#7ecbcb"></div>
<div class="a" style="left:623px;top:694px;width:60px;height:60px;border-radius:50%;background:#35999a"></div>
<svg style="left:480px;top:710px" width="38" height="30" viewBox="0 0 38 30" fill="none" stroke="#006d70" stroke-width="4.5" stroke-linecap="round" stroke-linejoin="round" ><path d="M3 15 L15 26 L35 5"/></svg>
<svg style="left:557px;top:707px" width="38" height="34" viewBox="0 0 38 34" fill="none" stroke="#006d70" stroke-width="4.5" stroke-linecap="round" stroke-linejoin="round" ><path d="M3 17 L34 17 M20 3 L34 17 L20 31"/></svg>
<svg style="left:633px;top:706px" width="44" height="40" viewBox="0 0 44 40" fill="none" stroke="#006d70" stroke-width="3.5" stroke-linecap="round" stroke-linejoin="round" ><path d="M16 2 L16 22 M16 2 L38 15 L22 23"/><path d="M5 30 L15 30 M10 24 C6 24 5 28 5 32 C5 37 7 40 10 40 C13 40 15 37 15 32 C15 28 14 24 10 24 Z M2 27 L6 28 M18 27 L14 28 M2 36 L6 35 M18 36 L14 35" stroke-width="2.6"/></svg>
<div class="a" style="left:710px;top:692px;width:501px;height:64px;background:#ffffff;border-radius:2px"></div>
<div class="t" style="left:734px;top:710.4px;font-size:27.7px;color:#4e5b61;font-weight:normal;font-style:normal;font-family:"Liberation Sans",sans-serif;">Select Board</div>
<svg style="left:1156px;top:719px" width="16" height="10" viewBox="0 0 16 10" fill="#4e5b61" stroke="none" stroke-width="0" stroke-linecap="round" stroke-linejoin="round" ><path d="M0 0 L15 0 L7.5 9 Z"/></svg>
<svg style="left:2841px;top:702px" width="38" height="42" viewBox="0 0 38 42" fill="none" stroke="#dae3e3" stroke-width="4" stroke-linecap="round" stroke-linejoin="round" ><path d="M2 22 L7 22 L13 38 L22 3 L29 22 L34 22"/></svg>
<svg style="left:2911px;top:707px" width="56" height="40" viewBox="0 0 56 40" fill="none" stroke="#dae3e3" stroke-width="4.5" stroke-linecap="round" stroke-linejoin="round" ><circle cx="22" cy="15.5" r="13"/><path d="M13 26 L7 32"/></svg>
<svg style="left:2911px;top:707px" width="56" height="40" viewBox="0 0 56 40" fill="#dae3e3" stroke="none" stroke-width="0" stroke-linecap="round" stroke-linejoin="round" ><circle cx="22" cy="15.5" r="2.8"/><circle cx="3" cy="16" r="2.5"/><circle cx="40" cy="16" r="2.5"/><circle cx="49" cy="16" r="2.5"/></svg>
<div class="a" style="left:442px;top:767px;width:2549px;height:70px;background:#ffffff;"></div>
<div class="a" style="left:442px;top:767px;width:104px;height:70px;background:#ecf1f1;"></div>
<div class="a" style="left:656px;top:767px;width:2335px;height:70px;background:#ecf1f1;border-bottom-left-radius:4px"></div>
<div class="t" style="left:563px;top:788.5px;font-size:27.5px;color:#1f2a2e;font-weight:normal;font-style:normal;font-family:"Liberation Sans",sans-serif;">ui.ino</div>
<div class="a" style="left:2932.5px;top:799.5px;width:5px;height:5px;border-radius:50%;background:#4e5b61"></div>
<div class="a" style="left:2943.5px;top:799.5px;width:5px;height:5px;border-radius:50%;background:#4e5b61"></div>
<div class="a" style="left:2954.5px;top:799.5px;width:5px;height:5px;border-radius:50%;background:#4e5b61"></div>
<div class="a" style="left:442px;top:837px;width:104px;height:1151px;background:#ecf1f1;"></div>
<svg style="left:465px;top:794px" width="58" height="50" viewBox="0 0 58 50" fill="none" stroke="#c1c9c9" stroke-width="4" stroke-linecap="round" stroke-linejoin="round" stroke-linecap="butt" stroke-linejoin="miter"><path d="M2.5 45 L2.5 4 L19 4 L24 10 L52 10 L52 45 Z M2.5 12 L24 12"/></svg>
<svg style="left:467px;top:910px" width="56" height="46" viewBox="0 0 56 46" fill="none" stroke="#c1c9c9" stroke-width="4" stroke-linecap="round" stroke-linejoin="round" stroke-linecap="butt" stroke-linejoin="miter"><path d="M10 2 L52 2 L52 36 L49 40 L10 40 L10 23 M3 12 L18 12 L18 23 L3 23 Z M25 31 L45 31"/></svg>
<svg style="left:467px;top:1017px" width="56" height="56" viewBox="0 0 56 56" fill="none" stroke="#c1c9c9" stroke-width="4" stroke-linecap="round" stroke-linejoin="round" stroke-linecap="butt" stroke-linejoin="miter"><path d="M3 3 L13 3 L13 52 L3 52 Z M16 6 L26 6 L26 52 L16 52 Z M30 14 L39 12 L50 49 L41 52 Z"/></svg>
<svg style="left:472px;top:1133px" width="48" height="48" viewBox="0 0 48 48" fill="none" stroke="#c1c9c9" stroke-width="6" stroke-linecap="round" stroke-linejoin="round" ><circle cx="22.5" cy="22.5" r="19"/><path d="M11 34 L34 11"/></svg>
<svg style="left:466px;top:1240px" width="58" height="58" viewBox="0 0 58 58" fill="none" stroke="#c1c9c9" stroke-width="4.5" stroke-linecap="round" stroke-linejoin="round" ><circle cx="22" cy="22" r="19"/><path d="M36 36 L51 51"/></svg>
<svg style="left:467px;top:1910px" width="56" height="56" viewBox="0 0 56 56" fill="none" stroke="#c1c9c9" stroke-width="3.6" stroke-linecap="round" stroke-linejoin="round" ><circle cx="26" cy="26" r="24"/><circle cx="26" cy="20" r="9"/><path d="M12 43 C15 35 37 35 40 43"/></svg>
<div class="a" style="left:546px;top:837px;width:2417px;height:1125px;background:#ffffff;"></div>
<div class="a" style="left:693px;top:1921px;width:2270px;height:41px;background:#f3f5f5;"></div>
<div class="a" style="left:546px;top:837px;width:2417px;height:1125px;overflow:hidden">
<div class="a" style="left:147.0px;top:-64.84px;width:2px;height:615.45px;background:#d4d4d4"></div>
<div class="a" style="left:180.2px;top:-64.84px;width:2px;height:615.45px;background:#d4d4d4"></div>
<div class="a" style="left:147.0px;top:714.73px;width:2px;height:205.15px;background:#d4d4d4"></div>
<div class="a" style="left:180.2px;top:755.76px;width:2px;height:164.12px;background:#d4d4d4"></div>
<div class="ln" style="left:-9px;top:-21.81px;color:#237893">100</div>
<div class="code" style="left:146.8px;top:-21.81px">    disp = <span class="f">lv_display_create</span>( screenWidth, screenHeight );</div>
<div class="ln" style="left:-9px;top:19.22px;color:#237893">101</div>
<div class="code" style="left:146.8px;top:19.22px">    <span class="f">lv_display_set_buffers</span>( disp, buf, NULL, SCREENBUFFER_SIZE_PIXELS * <span class="f">sizeof</span>(<span class="k">lv_color_t</span>), LV_DISPLAY_RENDER_MODE_PARTIAL );</div>
<div class="ln" style="left:-9px;top:60.25px;color:#237893">102</div>
<div class="code" style="left:146.8px;top:60.25px">    <span class="f">lv_display_set_flush_cb</span>( disp, my_disp_flush );</div>
<div class="ln" style="left:-9px;top:101.28px;color:#237893">103</div>
<div class="ln" style="left:-9px;top:142.31px;color:#237893">104</div>
<div class="code" style="left:146.8px;top:142.31px">    <span class="k">static</span> <span class="k">lv_indev_t</span>* indev;</div>
<div class="ln" style="left:-9px;top:183.34px;color:#237893">105</div>
<div class="code" style="left:146.8px;top:183.34px">    indev = <span class="f">lv_indev_create</span>();</div>
<div class="ln" style="left:-9px;top:224.37px;color:#237893">106</div>
<div class="code" style="left:146.8px;top:224.37px">    <span class="f">lv_indev_set_type</span>( indev, LV_INDEV_TYPE_POINTER );</div>
<div class="ln" style="left:-9px;top:265.40px;color:#237893">107</div>
<div class="code" style="left:146.8px;top:265.40px">    <span class="f">lv_indev_set_read_cb</span>( indev, my_touchpad_read );</div>
<div class="ln" style="left:-9px;top:306.43px;color:#237893">108</div>
<div class="ln" style="left:-9px;top:347.46px;color:#237893">109</div>
<div class="code" style="left:146.8px;top:347.46px">    <span class="f">lv_tick_set_cb</span>( my_tick_get_cb );</div>
<div class="ln" style="left:-9px;top:388.49px;color:#237893">110</div>
<div class="ln" style="left:-9px;top:429.52px;color:#237893">111</div>
<div class="code" style="left:146.8px;top:429.52px">    <span class="f">ui_init</span>();</div>
<div class="ln" style="left:-9px;top:470.55px;color:#237893">112</div>
<div class="ln" style="left:-9px;top:511.58px;color:#237893">113</div>
<div class="code" style="left:146.8px;top:511.58px">    <span class="f">Serial</span>.<span class="f">println</span>( <span class="s">"Setup done"</span> );</div>
<div class="ln" style="left:-9px;top:552.61px;color:#237893">114</div>
<div class="code" style="left:146.8px;top:552.61px">}</div>
<div class="ln" style="left:-9px;top:593.64px;color:#237893">115</div>
<div class="ln" style="left:-9px;top:634.67px;color:#237893">116</div>
<div class="code" style="left:146.8px;top:634.67px"><span class="k">void</span> <span class="f">loop</span> ()</div>
<div class="ln" style="left:-9px;top:675.70px;color:#237893">117</div>
<div class="code" style="left:146.8px;top:675.70px">{</div>
<div class="ln" style="left:-9px;top:716.73px;color:#237893">118</div>
<div class="ln" style="left:-9px;top:757.76px;color:#237893">119</div>
<div class="code" style="left:146.8px;top:757.76px">    <span class="f">lv_label_set_text</span>(ui_LabelTemp, <span class="s">"New text"</span>)</div>
<div class="ln" style="left:-9px;top:798.79px;color:#237893">120</div>
<div class="ln" style="left:-9px;top:839.82px;color:#237893">121</div>
<div class="code" style="left:146.8px;top:839.82px">    <span class="f">lv_timer_handler</span>(); <span class="c">/* let the GUI do its work */</span></div>
<div class="ln" style="left:-9px;top:880.85px;color:#237893">122</div>
<div class="code" style="left:146.8px;top:880.85px">    <span class="f">delay</span>(<span class="s">5</span>);</div>
<div class="ln" style="left:-9px;top:921.88px;color:#237893">123</div>
<div class="code" style="left:146.8px;top:921.88px">}</div>
<div class="ln" style="left:-9px;top:962.91px;color:#237893">124</div>
<div class="ln" style="left:-9px;top:1003.94px;color:#237893">125</div>
<div class="ln" style="left:-9px;top:1044.97px;color:#237893">126</div>
<div class="ln" style="left:-9px;top:1086.00px;color:#0b216f">127</div>
</div>
<svg style="left:1056px;top:1588px;mix-blend-mode:multiply" width="208" height="46" viewBox="0 0 208 46"><path d="M4 8 C10 3 30 3 60 3 C100 3 130 6 160 8 C175 9 185 10 200 10 L202 40 L170 40 L170 44 C120 44 60 42 12 42 C6 38 4 20 4 8 Z" fill="#e8008c"/></svg>
<svg style="left:700px;top:1488px" width="870" height="180" viewBox="0 0 870 180" fill="none" stroke="#fcc600" stroke-width="5.5" stroke-linecap="round" stroke-linejoin="round" ><path d="M5.1 138.1 C7.2 144.7 8.7 153.6 20.5 159.4 C32.3 165.3 21.1 170.6 75.8 173.1 C130.5 175.5 257.0 174.2 348.5 174.2 C440.0 174.2 559.7 174.5 624.8 173.1 C689.9 171.7 706.5 171.8 739.0 165.7 C771.6 159.6 800.1 146.1 820.1 136.2 C840.0 126.4 852.1 114.4 858.8 106.8 C865.4 99.1 865.1 94.8 859.9 90.2 C854.7 85.6 834.0 82.2 827.5 79.1 C820.9 76.0 830.0 76.4 820.8 71.7 C811.6 67.1 795.6 57.0 772.2 51.5 C748.7 46.0 720.0 44.7 680.1 38.6 C640.2 32.4 575.7 19.9 532.7 14.6 C489.7 9.4 465.1 8.5 422.2 7.3 C379.2 6.0 310.4 6.0 274.8 7.3 C239.2 8.5 231.8 10.3 208.4 14.6 C185.1 18.9 157.5 26.3 134.8 33.1 C112.0 39.8 89.9 46.0 72.1 55.2 C54.3 64.4 38.6 77.6 27.9 88.3 C17.2 99.1 11.4 111.4 7.6 119.6 C3.8 127.9 2.9 131.4 5.1 138.1 Z"/></svg>
<div class="a" style="left:2963px;top:837px;width:1px;height:1125px;background:#e3e6e6;"></div>
<div class="a" style="left:2964px;top:1735px;width:27px;height:227px;background:#c3c3c3;"></div>
<div class="a" style="left:2964px;top:1921px;width:27px;height:41px;background:#bbbdbd;"></div>
<div class="a" style="left:2964px;top:1962px;width:27px;height:26px;background:#c8c8c8;"></div>
<div class="a" style="left:2963px;top:1735px;width:1px;height:253px;background:#a9a9a9;"></div>
<div class="a" style="left:2964px;top:1971px;width:27px;height:4px;background:#6c7779;"></div>
<div class="a" style="left:693px;top:1962px;width:1680px;height:25px;background:#c3c3c3;"></div>
<div class="a" style="left:442px;top:1988px;width:2549px;height:47px;background:#006d70;"></div>
<div class="t" style="left:2485px;top:2000.0px;font-size:24.5px;color:#ffffff;font-weight:normal;font-style:normal;font-family:"Liberation Sans",sans-serif;">Ln 127, Col 1</div>
<svg style="left:2663px;top:2003px" width="18" height="18" viewBox="0 0 18 18" fill="none" stroke="#ffffff" stroke-width="2.2" stroke-linecap="round" stroke-linejoin="round" ><path d="M1 1 L17 17 M17 1 L1 17"/></svg>
<div class="t" style="left:2696px;top:1999.5px;font-size:25.6px;color:#ffffff;font-weight:normal;font-style:normal;font-family:"Liberation Sans",sans-serif;">No board selected</div>
<svg style="left:2926px;top:1997px" width="27" height="30" viewBox="0 0 27 30" fill="none" stroke="#ffffff" stroke-width="2.2" stroke-linecap="round" stroke-linejoin="round" ><path d="M4 22 L4 12 C4 6 8 2 13 2 C18 2 22 6 22 12 L22 22 L25 24 L1 24 Z M10 26 C10 29 16 29 16 26"/></svg>
</body></html>
